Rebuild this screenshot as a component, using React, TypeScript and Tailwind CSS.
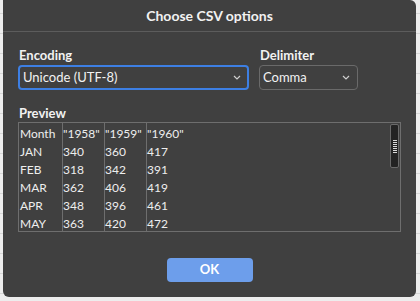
const rows = [
  ['Month', '"1958"', '"1959"', '"1960"'],
  ['JAN', '340', '360', '417'],
  ['FEB', '318', '342', '391'],
  ['MAR', '362', '406', '419'],
  ['APR', '348', '396', '461'],
  ['MAY', '363', '420', '472'],
];

function Chevron() {
  return (
    <svg width="8" height="5" viewBox="0 0 8 5" className="shrink-0">
      <polyline points="1,1 4,4 7,1" fill="none" stroke="#cfcfcf" strokeWidth="1.2" />
    </svg>
  );
}

export default function App() {
  return (
    <div className="w-[420px] h-[301px] overflow-hidden bg-[#ededed] bg-[repeating-linear-gradient(to_bottom,transparent_0px,transparent_13px,#d6d6d6_13px,#d6d6d6_14px,transparent_14px,transparent_20px)] font-['Lato',sans-serif]">
      <div className="ml-[3px] w-[413px] h-[297px] bg-[#404040] rounded-tr-[6px] rounded-b-[6px] flex flex-col text-[#f2f2f2]">
        {/* Title */}
        <div className="h-[32px] flex items-center justify-center border-b border-[#5c5c5c] text-[14px] font-bold">
          Choose CSV options
        </div>

        <div className="px-[15px] pt-[14px] flex flex-col">
          <div className="flex gap-[10px]">
            <div className="flex flex-col">
              <label className="h-[19px] text-[13px] font-bold leading-[19px] pl-[1px]">Encoding</label>
              <div className="w-[231px] h-[25px] border-2 border-[#3d7fe3] rounded-[4px] flex items-center justify-between pl-[3px] pr-[6px] text-[13px]">
                <span>Unicode (UTF-8)</span>
                <Chevron />
              </div>
            </div>
            <div className="flex flex-col">
              <label className="h-[19px] text-[13px] font-bold leading-[19px] pl-[1px]">Delimiter</label>
              <div className="w-[99px] h-[25px] border border-[#6a6a6a] rounded-[4px] flex items-center justify-between pl-[3px] pr-[7px] text-[13px]">
                <span>Comma</span>
                <Chevron />
              </div>
            </div>
          </div>

          <label className="mt-[14px] h-[18px] text-[13px] font-bold leading-[18px] pl-[1px]">Preview</label>
          <div className="relative w-[383px] h-[110px] border border-[#6e6e6e] flex">
            {[0, 1, 2, 3].map((c) => (
              <div
                key={c}
                className={`flex flex-col gap-[6px] pt-[5px] ${c === 0 ? 'w-[43px] pl-[1px]' : 'w-[42px] border-l border-[#6e6e6e]'}`}
              >
                {rows.map((r, i) => (
                  <div key={i} className="h-[12px] leading-[12px] text-[12px] text-[#eeeeee] whitespace-nowrap">
                    {r[c]}
                  </div>
                ))}
              </div>
            ))}
            {/* scrollbar */}
            <div className="absolute right-[1px] top-[1px] w-[9px] h-[44px] bg-[#232323] border border-[#6a6a6a] rounded-[2px] flex flex-col items-center justify-center gap-[1px]">
              {[0, 1, 2, 3, 4, 5, 6].map((i) => (
                <div key={i} className="w-[4px] h-[1px] bg-[#d8d8d8]" />
              ))}
            </div>
          </div>

          <div className="mt-[26px] flex justify-center">
            <button className="w-[86px] h-[24px] rounded-[4px] bg-[#6d9eeb] text-white text-[13px] font-bold">
              OK
            </button>
          </div>
        </div>
      </div>
    </div>
  );
}
